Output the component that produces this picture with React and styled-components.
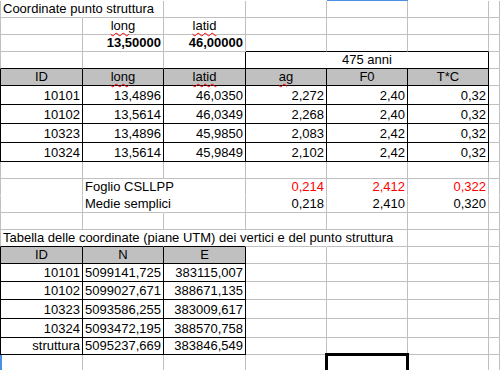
import React from 'react';
import styled, { createGlobalStyle } from 'styled-components';

const GlobalStyle = createGlobalStyle`
  html, body {
    margin: 0;
    padding: 0;
    background: #fff;
  }
  body {
    font-family: "Liberation Sans", Arial, sans-serif;
    font-size: 13px;
    color: #000;
    overflow: hidden;
  }
`;

const GRID = '#c0c0c0';
const INK = '#000';
const SELECT = '#4a90e2';

// g = gridline, k = black border, n = hidden (text overflows), s = selection blue
const line = (v) => {
  if (v === 'k') return `1px solid ${INK}`;
  if (v === 'n') return '1px solid transparent';
  if (v === 's') return `2px solid ${SELECT}`;
  return `1px solid ${GRID}`;
};

const Sheet = styled.div`
  width: 500px;
  height: 370px;
  overflow: hidden;
  background: #fff;
`;

const Row = styled.div`
  display: grid;
  grid-template-columns: 83px 81px 82px 81px 81px 81px 1fr;
  height: ${(p) => p.$h}px;
`;

const Edge = styled.div`
  background: ${(p) => (p.$on ? SELECT : 'transparent')};
`;

const Cell = styled.div`
  position: relative;
  box-sizing: border-box;
  display: flex;
  align-items: flex-end;
  justify-content: ${(p) =>
    p.$align === 'right' ? 'flex-end' : p.$align === 'center' ? 'center' : 'flex-start'};
  grid-column: span ${(p) => p.$span || 1};
  padding: 0 2px 1px;
  border-right: ${(p) => line(p.$r)};
  border-bottom: ${(p) => line(p.$b)};
  border-left: ${(p) => (p.$l ? line(p.$l) : 'none')};
  background: ${(p) => (p.$head ? '#c0c0c0' : 'transparent')};
  white-space: nowrap;
  line-height: 15px;
  font-weight: ${(p) => (p.$bold ? 700 : 400)};
  color: ${(p) => (p.$red ? '#ff0000' : INK)};
`;

const Spell = styled.span`
  text-decoration: underline wavy #ff0000;
  text-decoration-thickness: 1px;
  text-underline-offset: 2px;
`;

const Cursor = styled.div`
  position: absolute;
  top: -2px;
  left: -2px;
  width: 84px;
  height: 40px;
  box-sizing: border-box;
  border: 3px solid #000;
`;

const firstTable = [
  ['10101', '13,4896', '46,0350', '2,272', '2,40', '0,32'],
  ['10102', '13,5614', '46,0349', '2,268', '2,40', '0,32'],
  ['10323', '13,4896', '45,9850', '2,083', '2,42', '0,32'],
  ['10324', '13,5614', '45,9849', '2,102', '2,42', '0,32'],
];

const utm = [
  ['10101', '5099141,725', '383115,007', 18],
  ['10102', '5099027,671', '388671,135', 18],
  ['10323', '5093586,255', '383009,617', 19],
  ['10324', '5093472,195', '388570,758', 19],
  ['struttura', '5095237,669', '383846,549', 17],
];

const EmptyRow = ({ h }) => (
  <Row $h={h}>
    <Cell $l="g" />
    <Cell />
    <Cell />
    <Cell />
    <Cell />
    <Cell />
    <Cell />
  </Row>
);

export default function App() {
  return (
    <Sheet>
      <GlobalStyle />
      <Row $h={1}>
        <Edge />
        <Edge />
        <Edge />
        <Edge />
        <Edge $on />
        <Edge />
        <Edge />
      </Row>

      <Row $h={17}>
        <Cell $l="g" $r="n">Coordinate punto struttura</Cell>
        <Cell />
        <Cell />
        <Cell />
        <Cell />
        <Cell />
        <Cell />
      </Row>

      <Row $h={17}>
        <Cell $l="g" />
        <Cell $align="center"><Spell>long</Spell></Cell>
        <Cell $align="center"><Spell>latid</Spell></Cell>
        <Cell />
        <Cell />
        <Cell />
        <Cell />
      </Row>

      <Row $h={17}>
        <Cell $l="g" />
        <Cell $align="right" $bold>13,50000</Cell>
        <Cell $align="right" $bold>46,00000</Cell>
        <Cell $b="k" />
        <Cell $b="k" />
        <Cell $b="k" />
        <Cell />
      </Row>

      <Row $h={17}>
        <Cell $l="g" $b="k" />
        <Cell $b="k" />
        <Cell $b="k" $r="k" />
        <Cell $span={3} $align="center" $r="k" $b="k">475 anni</Cell>
        <Cell />
      </Row>

      <Row $h={17}>
        <Cell $head $l="k" $r="k" $b="k" $align="center">ID</Cell>
        <Cell $head $r="k" $b="k" $align="center"><Spell>long</Spell></Cell>
        <Cell $head $r="k" $b="k" $align="center"><Spell>latid</Spell></Cell>
        <Cell $head $r="k" $b="k" $align="center"><Spell>ag</Spell></Cell>
        <Cell $head $r="k" $b="k" $align="center">F0</Cell>
        <Cell $head $r="k" $b="k" $align="center">T*C</Cell>
        <Cell />
      </Row>

      {firstTable.map((r) => (
        <Row $h={19} key={r[0]}>
          {r.map((v, i) => (
            <Cell key={i} $l={i === 0 ? 'k' : undefined} $r="k" $b="k" $align="right">
              {v}
            </Cell>
          ))}
          <Cell />
        </Row>
      ))}

      <EmptyRow h={17} />

      <Row $h={17}>
        <Cell $l="g" $b="n" />
        <Cell $r="n" $b="n">Foglio CSLLPP</Cell>
        <Cell $b="n" />
        <Cell $b="n" $align="right" $red>0,214</Cell>
        <Cell $b="n" $align="right" $red>2,412</Cell>
        <Cell $b="n" $align="right" $red>0,322</Cell>
        <Cell $b="n" />
      </Row>

      <Row $h={17}>
        <Cell $l="g" />
        <Cell $r="n">Medie semplici</Cell>
        <Cell />
        <Cell $align="right">0,218</Cell>
        <Cell $align="right">2,410</Cell>
        <Cell $align="right">0,320</Cell>
        <Cell />
      </Row>

      <EmptyRow h={17} />

      <Row $h={17}>
        <Cell $l="g" $r="n" $b="k">
          Tabella delle coordinate (piane UTM) dei vertici e del punto struttura
        </Cell>
        <Cell $r="n" $b="k" />
        <Cell $r="n" $b="k" />
        <Cell $r="n" />
        <Cell />
        <Cell />
        <Cell />
      </Row>

      <Row $h={17}>
        <Cell $head $l="k" $r="k" $b="k" $align="center">ID</Cell>
        <Cell $head $r="k" $b="k" $align="center">N</Cell>
        <Cell $head $r="k" $b="k" $align="center">E</Cell>
        <Cell />
        <Cell />
        <Cell />
        <Cell />
      </Row>

      {utm.map(([id, n, e, h]) => (
        <Row $h={h} key={id}>
          <Cell $l="k" $r="k" $b="k" $align="right">{id}</Cell>
          <Cell $r="k" $b="k" $align="right">{n}</Cell>
          <Cell $r="k" $b="k" $align="right">{e}</Cell>
          <Cell />
          <Cell />
          <Cell />
          <Cell />
        </Row>
      ))}

      <Row $h={16}>
        <Cell $l="s" />
        <Cell />
        <Cell />
        <Cell />
        <Cell>
          <Cursor />
        </Cell>
        <Cell />
        <Cell />
      </Row>
    </Sheet>
  );
}
